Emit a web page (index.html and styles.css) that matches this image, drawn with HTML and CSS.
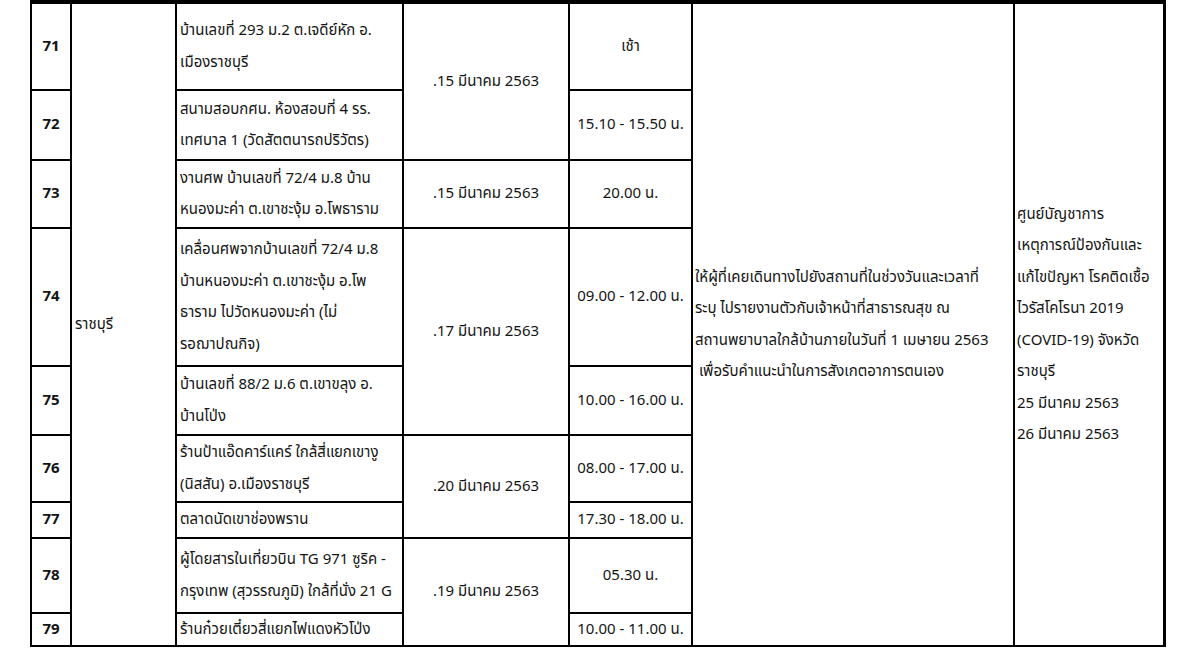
FILE: index.html
```html
<!DOCTYPE html>
<html lang="th">
<head>
<meta charset="utf-8">
<title>ราชบุรี</title>
<link rel="stylesheet" href="styles.css">
</head>
<body>
<div class="sheet">
  <div class="c num">71</div>
  <div class="c prov span9">ราชบุรี</div>
  <div class="c place">บ้านเลขที่ 293 ม.2 ต.เจดีย์หัก อ.<br>เมืองราชบุรี</div>
  <div class="c mid span2">.15 มีนาคม 2563</div>
  <div class="c mid">เช้า</div>
  <div class="c desc span9">ให้ผู้ที่เคยเดินทางไปยังสถานที่ในช่วงวันและเวลาที่<br>ระบุ ไปรายงานตัวกับเจ้าหน้าที่สาธารณสุข ณ<br>สถานพยาบาลใกล้บ้านภายในวันที่ 1 เมษายน 2563<br>&nbsp;เพื่อรับคำแนะนำในการสังเกตอาการตนเอง</div>
  <div class="c org span9">ศูนย์บัญชาการ<br>เหตุการณ์ป้องกันและ<br>แก้ไขปัญหา โรคติดเชื้อ<br>ไวรัสโคโรนา 2019<br>(COVID-19) จังหวัด<br>ราชบุรี<br>25 มีนาคม 2563<br>26 มีนาคม 2563</div>

  <div class="c num">72</div>
  <div class="c place">สนามสอบกศน. ห้องสอบที่ 4 รร.<br>เทศบาล 1 (วัดสัตตนารถปริวัตร)</div>
  <div class="c mid">15.10 - 15.50 น.</div>

  <div class="c num">73</div>
  <div class="c place">งานศพ บ้านเลขที่ 72/4 ม.8 บ้าน<br>หนองมะค่า ต.เขาชะงุ้ม อ.โพธาราม</div>
  <div class="c mid">.15 มีนาคม 2563</div>
  <div class="c mid">20.00 น.</div>

  <div class="c num">74</div>
  <div class="c place">เคลื่อนศพจากบ้านเลขที่ 72/4 ม.8<br>บ้านหนองมะค่า ต.เขาชะงุ้ม อ.โพ<br>ธาราม ไปวัดหนองมะค่า (ไม่<br>รอฌาปณกิจ)</div>
  <div class="c mid span2">.17 มีนาคม 2563</div>
  <div class="c mid">09.00 - 12.00 น.</div>

  <div class="c num">75</div>
  <div class="c place">บ้านเลขที่ 88/2 ม.6 ต.เขาขลุง อ.<br>บ้านโป่ง</div>
  <div class="c mid">10.00 - 16.00 น.</div>

  <div class="c num">76</div>
  <div class="c place">ร้านป้าแอ๊ดคาร์แคร์ ใกล้สี่แยกเขางู<br>(นิสสัน) อ.เมืองราชบุรี</div>
  <div class="c mid span2">.20 มีนาคม 2563</div>
  <div class="c mid">08.00 - 17.00 น.</div>

  <div class="c num">77</div>
  <div class="c place">ตลาดนัดเขาช่องพราน</div>
  <div class="c mid">17.30 - 18.00 น.</div>

  <div class="c num">78</div>
  <div class="c place">ผู้โดยสารในเที่ยวบิน TG 971 ซูริค -<br>กรุงเทพ (สุวรรณภูมิ) ใกล้ที่นั่ง 21 G</div>
  <div class="c mid span2">.19 มีนาคม 2563</div>
  <div class="c mid">05.30 น.</div>

  <div class="c num">79</div>
  <div class="c place">ร้านก๋วยเตี๋ยวสี่แยกไฟแดงหัวโป่ง</div>
  <div class="c mid">10.00 - 11.00 น.</div>
</div>
</body>
</html>
```
FILE: styles.css
```css
html, body {
  margin: 0;
  padding: 0;
  background: #fff;
}

body {
  font-family: Tahoma, "Noto Sans Thai", "DejaVu Sans", "Noto Sans", sans-serif;
  font-size: 15px;
  color: #141414;
}

.sheet {
  display: grid;
  width: max-content;
  margin-left: 30px;
  background: #000;
  padding: 4px 3px 2px 2px;
  gap: 2px;
  grid-template-columns: 38px 103px 225px 164px 121px 320px 148px;
  grid-template-rows: 85px 68px 66px 136px 67px 65px 34px 73px 31px;
}

.c {
  background: #fff;
  display: flex;
  align-items: center;
  white-space: nowrap;
  line-height: 31.5px;
  overflow: hidden;
}

.span2 { grid-row: span 2; }
.span9 { grid-row: span 9; }

.num {
  justify-content: center;
  font-weight: bold;
}

.prov { padding-left: 3px; }
.place { padding-left: 3px; }

.mid {
  justify-content: center;
  text-align: center;
}

.desc { padding-left: 2px; }
.org { padding-left: 2px; }
```
